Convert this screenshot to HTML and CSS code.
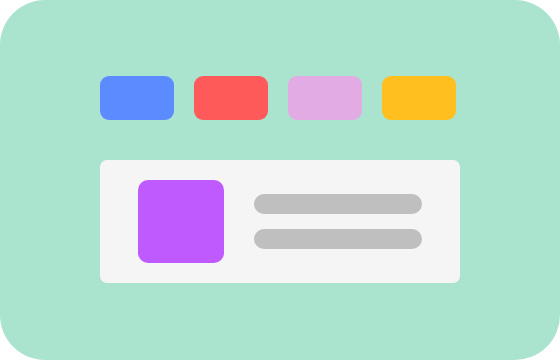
FILE: index.html
```html
<!DOCTYPE html>
<html>
<head>
<meta charset="utf-8">
<link rel="stylesheet" href="styles.css">
</head>
<body>
<div class="frame">
  <div class="swatches">
    <div class="swatch blue"></div>
    <div class="swatch red"></div>
    <div class="swatch pink"></div>
    <div class="swatch orange"></div>
  </div>
  <div class="card">
    <div class="thumb"></div>
    <div class="lines">
      <div class="line"></div>
      <div class="line"></div>
    </div>
  </div>
</div>
</body>
</html>
```

FILE: styles.css
```css
html, body {
  margin: 0;
  padding: 0;
  background: #ffffff;
}
.frame {
  width: 560px;
  height: 360px;
  box-sizing: border-box;
  border-radius: 45px;
  background: #aae4cf;
  padding: 76px 0 0 100px;
}
.swatches {
  display: flex;
  gap: 20px;
}
.swatch {
  width: 74px;
  height: 44px;
  border-radius: 9px;
}
.blue { background: #5b8bff; }
.red { background: #ff5a5a; }
.pink { background: #e2abe4; }
.orange { background: #ffc01f; }
.card {
  margin-top: 40px;
  width: 360px;
  height: 123px;
  box-sizing: border-box;
  background: #f5f5f5;
  border-radius: 7px;
  padding: 0 38px;
  display: flex;
  align-items: center;
  gap: 30px;
}
.thumb {
  width: 86px;
  height: 83px;
  border-radius: 10px;
  background: #bf5aff;
}
.lines {
  flex: 1;
  display: flex;
  flex-direction: column;
  gap: 15px;
}
.line {
  height: 20px;
  border-radius: 10px;
  background: #bfbfbf;
}
```
